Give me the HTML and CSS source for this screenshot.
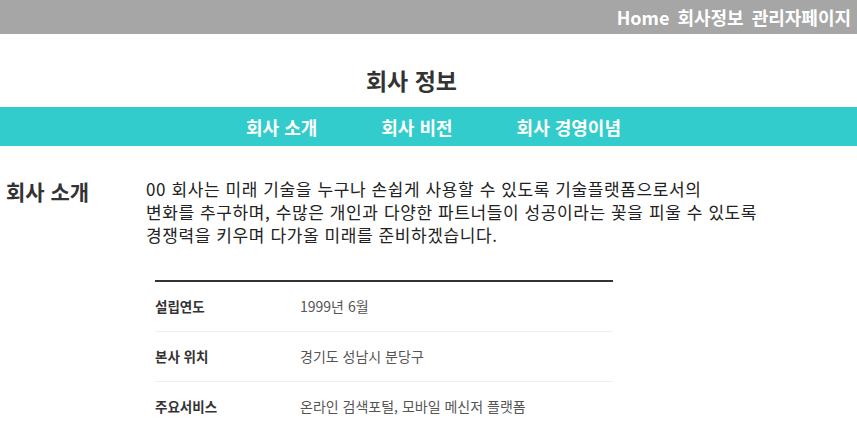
FILE: index.html
```html
<!DOCTYPE html>
<html lang="ko">
<head>
<meta charset="utf-8">
<link rel="stylesheet" href="styles.css">
</head>
<body>
<header class="topbar">
  <nav class="topnav">
    <a href="#">Home</a>
    <a href="#">회사정보</a>
    <a href="#">관리자페이지</a>
  </nav>
</header>
<h1 class="title">회사 정보</h1>
<nav class="subnav">
  <a href="#">회사 소개</a>
  <a href="#">회사 비전</a>
  <a href="#">회사 경영이념</a>
</nav>
<section class="intro">
  <h2 class="intro-label">회사 소개</h2>
  <div class="intro-body">
    <p class="intro-text">00 회사는 미래 기술을 누구나 손쉽게 사용할 수 있도록 기술플랫폼으로서의<br>변화를 추구하며, 수많은 개인과 다양한 파트너들이 성공이라는 꽃을 피울 수 있도록<br>경쟁력을 키우며 다가올 미래를 준비하겠습니다.</p>
    <table class="info">
      <tr><th>설립연도</th><td>1999년 6월</td></tr>
      <tr><th>본사 위치</th><td>경기도 성남시 분당구</td></tr>
      <tr><th>주요서비스</th><td>온라인 검색포털, 모바일 메신저 플랫폼</td></tr>
    </table>
  </div>
</section>
</body>
</html>
```
FILE: styles.css
```css
* { box-sizing: border-box; }
body {
  margin: 0;
  font-family: "Noto Sans CJK KR", "Noto Sans", sans-serif;
  color: #333;
}
a { text-decoration: none; color: inherit; }
.topbar {
  background: #a6a6a6;
  height: 34px;
  display: flex;
  justify-content: flex-end;
  align-items: center;
  padding-right: 6px;
}
.topnav {
  display: flex;
  gap: 8px;
  color: #fff;
  font-weight: 700;
  font-size: 18px;
  line-height: 1;
}
.title {
  margin: 0;
  height: 73px;
  display: flex;
  align-items: center;
  justify-content: center;
  padding-top: 19px;
  padding-right: 34px;
  font-size: 23px;
  font-weight: 700;
  color: #333;
}
.subnav {
  background: #33cccc;
  height: 39px;
  display: flex;
  justify-content: center;
  align-items: center;
  gap: 64px;
  color: #fff;
  font-weight: 700;
  font-size: 18px;
  padding-left: 10px;
}
.intro {
  display: flex;
  padding: 31px 0 0 6px;
}
.intro-label {
  margin: 0;
  width: 140px;
  flex: none;
  font-size: 21px;
  font-weight: 700;
  color: #333;
  line-height: 30px;
  margin-top: -1px;
}
.intro-text {
  margin: 0;
  font-size: 17px;
  line-height: 23px;
  font-weight: 400;
  color: #222;
  letter-spacing: 0.6px;
}
.info {
  margin: 34px 0 0 9px;
  width: 458px;
  border-collapse: collapse;
  border-top: 2px solid #333;
  font-size: 14px;
}
.info tr + tr { border-top: 1px solid #eee; }
.info th, .info td {
  height: 50px;
  padding: 0;
  text-align: left;
  vertical-align: middle;
}
.info th {
  width: 145px;
  font-size: 13.5px;
  font-weight: 700;
  color: #333;
}
.info td { color: #555; }
```
